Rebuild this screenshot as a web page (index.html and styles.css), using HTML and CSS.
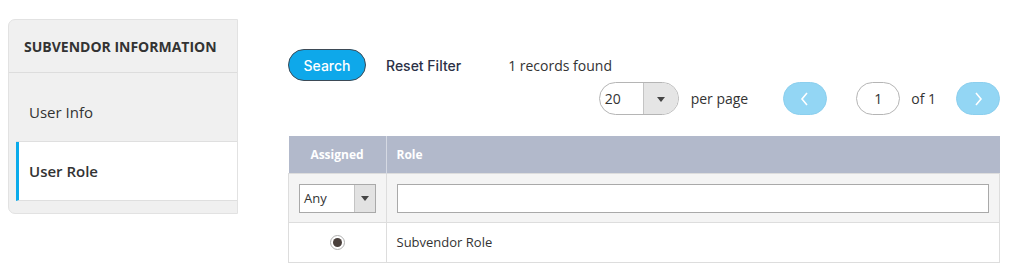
FILE: index.html
```
<!DOCTYPE html>
<html lang="en">
<head>
    <meta charset="UTF-8">
    <title>Subvendor - User Role</title>

    <link rel="stylesheet" href="styles.css">
</head>
<body>
    <div id="page">
        <div class="sidebar">
            <div class="side-title">Subvendor Information</div>
            <div class="side-menu">
                <div class="side-item">User Info</div>
                <div class="side-item active">User Role</div>
            </div>
        </div>
        <div class="main">
            <div class="toolbar">
                <button class="btn-search">Search</button>
                <a class="reset">Reset Filter</a>
                <span class="found">1 records found</span>
            </div>
            <div class="pager">
                <div class="select pill">
                    <span class="select-value">20</span>
                    <span class="select-arrow"></span>
                </div>
                <span class="pager-text per-page">per page</span>
                <button class="nav prev">
                    <svg width="10" height="16" viewBox="0 0 10 16"><path d="M7 2 L2 8 L7 14" fill="none" stroke="#fff" stroke-width="1.6"/></svg>
                </button>
                <div class="page-input">1</div>
                <span class="pager-text of-total">of 1</span>
                <button class="nav next">
                    <svg width="10" height="16" viewBox="0 0 10 16"><path d="M3 2 L8 8 L3 14" fill="none" stroke="#fff" stroke-width="1.6"/></svg>
                </button>
            </div>
            <table class="grid">
                <thead>
                    <tr>
                        <th class="col-assigned">Assigned</th>
                        <th class="col-role">Role</th>
                    </tr>
                </thead>
                <tbody>
                    <tr class="filters">
                        <td class="col-assigned">
                            <div class="select small">
                                <span class="select-value">Any</span>
                                <span class="select-arrow"></span>
                            </div>
                        </td>
                        <td class="col-role">
                            <div class="text-input"></div>
                        </td>
                    </tr>
                    <tr class="data">
                        <td class="col-assigned"><span class="radio"></span></td>
                        <td class="col-role">Subvendor Role</td>
                    </tr>
                </tbody>
            </table>
        </div>
    </div>
</body>
</html>
```

FILE: styles.css
```
body {
    margin: 0;
    background: #ffffff;
    font-family: "Open Sans", "Liberation Sans", sans-serif;
    color: #333333;
}

#page {
    display: flex;
    align-items: flex-start;
}

/* sidebar */

.sidebar {
    width: 230px;
    margin: 19px 0 0 8px;
    box-sizing: border-box;
    padding-bottom: 12px;
    background: #f0f0f0;
    border: 1px solid #e2e2e2;
    border-radius: 7px 0 0 7px;
}

.side-title {
    height: 52px;
    display: flex;
    align-items: center;
    padding-left: 15px;
    font-size: 14px;
    font-weight: 700;
    text-transform: uppercase;
    color: #333333;
    border-bottom: 1px solid #dddddd;
}

.side-menu {
    margin-left: 7px;
    padding-top: 10px;
}

.side-item {
    height: 58px;
    display: flex;
    align-items: center;
    padding-left: 13px;
    font-size: 15px;
    color: #333333;
    border-bottom: 1px solid #dfdfdf;
}

.side-item.active {
    background: #ffffff;
    border-left: 3px solid #0aabeb;
    padding-left: 10px;
    font-weight: 600;
}

/* main area */

.main {
    width: 712px;
    margin: 49px 0 0 50px;
}

.toolbar {
    display: flex;
    align-items: center;
    height: 32px;
}

.btn-search {
    width: 78px;
    height: 32px;
    border: 1px solid #3d4a56;
    border-radius: 16px;
    background: #0ea8ea;
    color: #ffffff;
    font-family: Inter, "Open Sans", sans-serif;
    font-size: 14px;
    font-weight: 500;
    padding: 0;
}

.reset {
    margin-left: 20px;
    font-family: Inter, "Open Sans", sans-serif;
    font-size: 14px;
    font-weight: 500;
    color: #2b3046;
}

.found {
    margin-left: 47px;
    font-size: 14px;
    color: #333333;
}

.pager {
    display: flex;
    justify-content: flex-end;
    align-items: center;
    height: 33px;
    margin-top: 1px;
}

.select {
    display: flex;
    box-sizing: border-box;
    border: 1px solid #b5b5b5;
    background: #ffffff;
    overflow: hidden;
}

.select.pill {
    width: 80px;
    height: 33px;
    border-radius: 17px;
}

.select-value {
    flex: 1;
    display: flex;
    align-items: center;
    padding-left: 5px;
    font-size: 14px;
    color: #333333;
}

.select-arrow {
    width: 34px;
    background: #e5e5e5;
    border-left: 1px solid #c4c4c4;
    position: relative;
}

.select-arrow::after {
    content: "";
    position: absolute;
    left: 50%;
    top: 50%;
    margin: -2px 0 0 -4px;
    border-left: 4px solid transparent;
    border-right: 4px solid transparent;
    border-top: 5px solid #444444;
}

.pager-text {
    font-size: 14px;
    color: #333333;
}

.per-page {
    margin-left: 12px;
}

.of-total {
    margin-left: 11px;
}

.nav {
    width: 44px;
    height: 33px;
    padding: 0;
    border: 1px solid #8ccfee;
    border-radius: 17px;
    background: #93d6f4;
    display: flex;
    align-items: center;
    justify-content: center;
}

.nav.prev {
    margin-left: 35px;
}

.nav.next {
    margin-left: 20px;
}

.page-input {
    width: 44px;
    height: 33px;
    box-sizing: border-box;
    margin-left: 29px;
    border: 1px solid #b5b5b5;
    border-radius: 17px;
    display: flex;
    align-items: center;
    justify-content: center;
    font-size: 14px;
}

/* table */

.grid {
    width: 100%;
    margin-top: 21px;
    border-collapse: collapse;
    font-size: 12px;
}

.grid th {
    height: 37px;
    padding: 0;
    background: #b2b9cb;
    color: #ffffff;
    font-weight: 700;
    text-align: left;
}

.grid th.col-assigned {
    width: 97px;
    text-align: center;
    border-right: 1px solid #d5d9e3;
}

.grid th.col-role {
    padding-left: 10px;
}

.grid td {
    padding: 0;
    border: 1px solid #dddddd;
}

.grid td.col-assigned {
    border-right: 1px dashed #cccccc;
    text-align: center;
}

.grid td.col-role {
    padding-left: 10px;
}

.filters td {
    height: 48px;
    background: #f4f4f4;
}

.filters td.col-assigned {
    padding-left: 10px;
}

.select.small {
    width: 77px;
    height: 29px;
    border-color: #a9a9a9;
    border-radius: 0;
}

.select.small .select-value {
    padding-left: 4px;
    font-size: 13px;
}

.select.small .select-arrow {
    width: 20px;
    background: #e2e2e2;
}

.text-input {
    width: 592px;
    height: 29px;
    box-sizing: border-box;
    border: 1px solid #a9a9a9;
    background: #ffffff;
}

.data td {
    height: 39px;
    font-size: 13px;
    line-height: 17px;
    color: #333333;
}

.radio {
    display: inline-block;
    width: 15px;
    height: 15px;
    box-sizing: border-box;
    border: 1px solid #b0b0b0;
    border-radius: 50%;
    background: #ffffff;
    vertical-align: middle;
    position: relative;
    top: -1px;
}

.radio::after {
    content: "";
    position: absolute;
    left: 2px;
    top: 2px;
    width: 9px;
    height: 9px;
    border-radius: 50%;
    background: #4a403c;
}
```
